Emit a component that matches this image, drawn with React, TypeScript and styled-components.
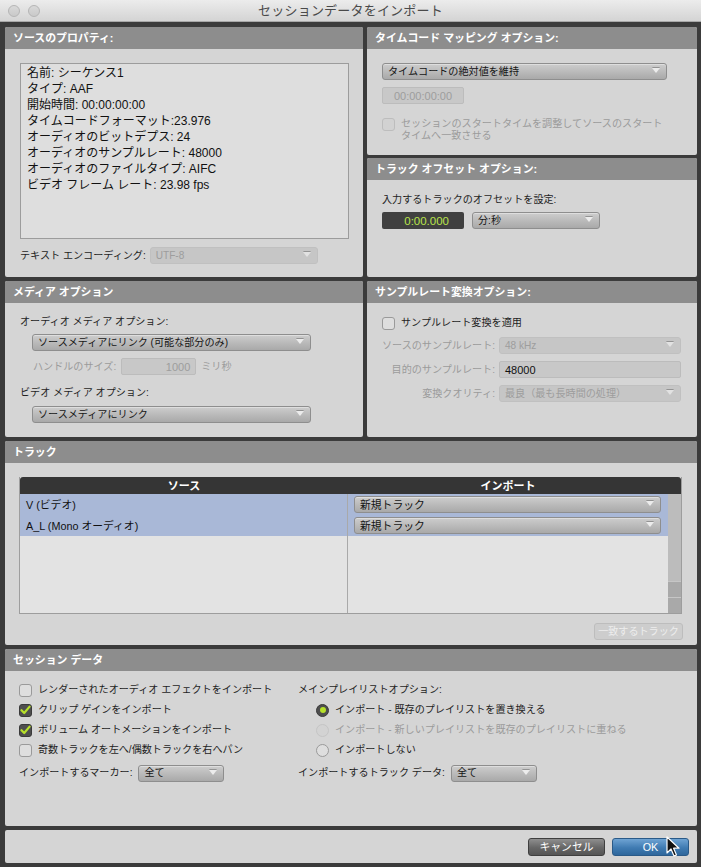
import React from "react";
import styled, { createGlobalStyle } from "styled-components";

const GlobalStyle = createGlobalStyle`
  html, body {
    margin: 0;
    padding: 0;
    background: #3b3b3b;
  }
  body {
    font-family: "Liberation Sans", "Noto Sans CJK JP", sans-serif;
    font-size: 10.1px;
    line-height: 14px;
    color: #1a1a1a;
  }
  * {
    box-sizing: border-box;
  }
`;

const Window = styled.div`
  position: relative;
  width: 701px;
  height: 867px;
  background: #3b3b3b;
  display: flex;
  flex-direction: column;
  overflow: hidden;
`;

const TitleBar = styled.div`
  height: 22px;
  flex: none;
  display: grid;
  grid-template-columns: 1fr auto 1fr;
  align-items: center;
  background: linear-gradient(#ececec, #d4d4d4);
  border-bottom: 1px solid #a8a8a8;
  padding: 0 8px;
`;

const Lights = styled.div`
  display: flex;
  gap: 8px;
`;

const Light = styled.span`
  width: 12px;
  height: 12px;
  border-radius: 50%;
  background: linear-gradient(#d9d9d9, #c9c9c9);
  border: 1px solid #b5b5b5;
`;

const Title = styled.div`
  font-size: 13px;
  color: #4a4a4a;
  letter-spacing: 0.2px;
`;

const Content = styled.div`
  flex: 1;
  display: grid;
  grid-template-rows: 250px 156px 204px 177px 33px;
  row-gap: 4px;
  padding: 5px 5px 0 5px;
`;

const TwoCol = styled.div`
  display: grid;
  grid-template-columns: 358px 330px;
  column-gap: 4px;
`;

const Stack = styled.div`
  display: grid;
  grid-template-rows: 128px 1fr;
  row-gap: 3px;
`;

const Panel = styled.section`
  background: #d5d5d5;
  border-radius: 2px;
  display: flex;
  flex-direction: column;
  overflow: hidden;
`;

const PanelHeader = styled.div`
  height: 22px;
  flex: none;
  background: #8d8d8d;
  color: #ffffff;
  font-size: 10.9px;
  font-weight: bold;
  padding: 0 8px;
  display: flex;
  align-items: center;
`;

const Body = styled.div<{ $pad: string }>`
  padding: ${(p) => p.$pad};
  display: flex;
  flex-direction: column;
  flex: 1;
`;

const ListBox = styled.div`
  width: 329px;
  height: 176px;
  background: #dedede;
  border: 1px solid #9c9c9c;
  padding: 1px 6px;
  font-size: 12px;
  line-height: 16px;
  color: #111;
`;

const Row = styled.div<{ $gap?: number; $mt?: number; $ml?: number; $top?: boolean }>`
  display: flex;
  align-items: ${(p) => (p.$top ? "flex-start" : "center")};
  gap: ${(p) => p.$gap ?? 4}px;
  margin-top: ${(p) => p.$mt ?? 0}px;
  margin-left: ${(p) => p.$ml ?? 0}px;
`;

const Label = styled.span<{ $dim?: boolean }>`
  color: ${(p) => (p.$dim ? "#9b9b9b" : "#1e1e1e")};
  white-space: nowrap;
`;

const SelectBox = styled.div<{ $w: number; $disabled?: boolean }>`
  position: relative;
  width: ${(p) => p.$w}px;
  height: 17px;
  flex: none;
  border-radius: 3px;
  padding: 0 5px;
  display: flex;
  align-items: center;
  white-space: nowrap;
  color: ${(p) => (p.$disabled ? "#9d9d9d" : "#151515")};
  background: ${(p) =>
    p.$disabled ? "#c6c6c6" : "linear-gradient(#cdcdcd, #b7b7b7 60%, #a9a9a9)"};
  border: 1px solid ${(p) => (p.$disabled ? "#c0c0c0" : "#8e8e8e")};
  box-shadow: ${(p) => (p.$disabled ? "none" : "inset 0 1px 0 rgba(255,255,255,0.35)")};
`;

const Arrow = styled.span<{ $disabled?: boolean }>`
  position: absolute;
  right: 6px;
  top: 4px;
  width: 0;
  height: 0;
  border-left: 4px solid transparent;
  border-right: 4px solid transparent;
  border-top: 5px solid ${(p) => (p.$disabled ? "#e2e2e2" : "#ececec")};
  filter: drop-shadow(0 -1px 0 rgba(0, 0, 0, 0.25));
`;

const Field = styled.div<{ $w: number; $align?: string; $dim?: boolean }>`
  width: ${(p) => p.$w}px;
  height: 17px;
  flex: none;
  border-radius: 2px;
  background: #c8c8c8;
  border: 1px solid #bcbcbc;
  display: flex;
  align-items: center;
  justify-content: ${(p) => p.$align ?? "flex-start"};
  padding: 0 5px;
  font-size: 11px;
  color: ${(p) => (p.$dim ? "#9d9d9d" : "#111")};
`;

const CounterField = styled.div`
  width: 82px;
  height: 17px;
  border-radius: 2px;
  background: #404040;
  color: #b9e44b;
  display: flex;
  align-items: center;
  justify-content: flex-end;
  padding-right: 15px;
  font-size: 11.5px;
`;

const Box = styled.span<{ $checked?: boolean; $disabled?: boolean }>`
  width: 13px;
  height: 13px;
  flex: none;
  border-radius: 3px;
  display: flex;
  align-items: center;
  justify-content: center;
  background: ${(p) => (p.$checked ? "#4e4e4e" : p.$disabled ? "#d2d2d2" : "#dedede")};
  border: 1px solid ${(p) => (p.$checked ? "#3a3a3a" : p.$disabled ? "#bdbdbd" : "#9a9a9a")};
`;

const Radio = styled.span<{ $on?: boolean; $disabled?: boolean }>`
  width: 13px;
  height: 13px;
  flex: none;
  border-radius: 50%;
  display: flex;
  align-items: center;
  justify-content: center;
  background: ${(p) => (p.$on ? "#4e4e4e" : p.$disabled ? "#d3d3d3" : "#dedede")};
  border: 1px solid ${(p) => (p.$on ? "#3a3a3a" : p.$disabled ? "#c5c5c5" : "#9a9a9a")};
  &::after {
    content: "";
    display: ${(p) => (p.$on ? "block" : "none")};
    width: 6px;
    height: 6px;
    border-radius: 50%;
    background: #b6e12a;
  }
`;

const Wrap = styled.div`
  line-height: 12px;
  color: #9b9b9b;
`;

const RateGrid = styled.div`
  display: grid;
  grid-template-columns: 117px 182px;
  row-gap: 7px;
  align-items: center;
  margin-top: 7px;
`;

const RightLabel = styled.span`
  text-align: right;
  padding-right: 4px;
  color: #9b9b9b;
  white-space: nowrap;
`;

const Table = styled.div`
  width: 663px;
  height: 137px;
  display: flex;
  flex-direction: column;
  background: #e3e3e3;
  border: 1px solid #9d9d9d;
  border-top: none;
`;

const TableHead = styled.div`
  height: 17px;
  flex: none;
  display: grid;
  grid-template-columns: 328px 320px 1fr;
  background: #353535;
  color: #fff;
  font-weight: bold;
  font-size: 11px;
  border-radius: 3px 3px 0 0;
`;

const HeadCell = styled.div`
  display: flex;
  align-items: center;
  justify-content: center;
`;

const TableBody = styled.div`
  flex: 1;
  display: grid;
  grid-template-columns: 328px 320px 1fr;
`;

const Column = styled.div<{ $divider?: boolean }>`
  display: flex;
  flex-direction: column;
  border-right: ${(p) => (p.$divider ? "1px solid #a9a9a9" : "none")};
`;

const TrackRow = styled.div`
  height: 21px;
  background: #a9b8d7;
  display: flex;
  align-items: center;
  padding-left: 6px;
  font-size: 10.8px;
  color: #111;
`;

const Scroll = styled.div`
  display: flex;
  flex-direction: column;
  background: #bababa;
`;

const ScrollTrack = styled.div`
  flex: 1;
  background: #bcbcbc;
`;

const ScrollBtn = styled.div`
  height: 16px;
  background: #a9a9a9;
  border-top: 1px solid #c6c6c6;
`;

const FlatButton = styled.div`
  align-self: flex-end;
  margin: 9px 14px 0 0;
  width: 89px;
  height: 17px;
  border-radius: 3px;
  background: #cdcdcd;
  border: 1px solid #bdbdbd;
  color: #ededed;
  white-space: nowrap;
  display: flex;
  align-items: center;
  justify-content: center;
`;

const SessionGrid = styled.div`
  display: grid;
  grid-template-columns: 279px 1fr;
  padding: 9px 14px 0 14px;
`;

const SessionCol = styled.div`
  display: flex;
  flex-direction: column;
`;

const OptRow = styled.div<{ $indent?: number; $mt?: number }>`
  height: 20px;
  display: flex;
  align-items: center;
  gap: 6px;
  padding-left: ${(p) => p.$indent ?? 0}px;
  margin-top: ${(p) => p.$mt ?? 0}px;
`;

const Footer = styled.div`
  background: #d5d5d5;
  border-radius: 2px;
  display: flex;
  align-items: center;
  justify-content: flex-end;
  gap: 7px;
  padding-right: 8px;
`;

const DialogButton = styled.div<{ $primary?: boolean }>`
  width: 77px;
  height: 18px;
  border-radius: 3px;
  display: flex;
  align-items: center;
  justify-content: center;
  color: #fff;
  font-size: 10.8px;
  background: ${(p) =>
    p.$primary
      ? "linear-gradient(#6fa3d3, #3f7bb2 55%, #2f679c)"
      : "linear-gradient(#8e8e8e, #666 55%, #555)"};
  border: 1px solid ${(p) => (p.$primary ? "#2a5a88" : "#3f3f3f")};
`;

const Cursor = styled.svg`
  position: absolute;
  left: 666px;
  top: 836px;
`;

const Select = ({ w, text, disabled }: { w: number; text: string; disabled?: boolean }) => (
  <SelectBox $w={w} $disabled={disabled}>
    {text}
    <Arrow $disabled={disabled} />
  </SelectBox>
);

const Check = ({ checked, disabled }: { checked?: boolean; disabled?: boolean }) => (
  <Box $checked={checked} $disabled={disabled}>
    {checked && (
      <svg width="11" height="10" viewBox="0 0 11 10">
        <path d="M1.5 5.2 L4.2 8 L9.6 1.6" fill="none" stroke="#b6e12a" strokeWidth="2.2" strokeLinecap="round" strokeLinejoin="round" />
      </svg>
    )}
  </Box>
);

const sourceProps = [
  "名前: シーケンス1",
  "タイプ: AAF",
  "開始時間: 00:00:00:00",
  "タイムコードフォーマット:23.976",
  "オーディオのビットデプス: 24",
  "オーディオのサンプルレート: 48000",
  "オーディオのファイルタイプ: AIFC",
  "ビデオ フレーム レート: 23.98 fps",
];

const tracks = ["V (ビデオ)", "A_L (Mono オーディオ)"];

export default function App() {
  return (
    <Window>
      <GlobalStyle />
      <TitleBar>
        <Lights>
          <Light />
          <Light />
        </Lights>
        <Title>セッションデータをインポート</Title>
        <span />
      </TitleBar>

      <Content>
        <TwoCol>
          <Panel>
            <PanelHeader>ソースのプロパティ:</PanelHeader>
            <Body $pad="14px 0 0 15px">
              <ListBox>
                {sourceProps.map((t) => (
                  <div key={t}>{t}</div>
                ))}
              </ListBox>
              <Row $mt={8}>
                <Label>テキスト エンコーディング:</Label>
                <Select w={168} text="UTF-8" disabled />
              </Row>
            </Body>
          </Panel>

          <Stack>
            <Panel>
              <PanelHeader>タイムコード マッピング オプション:</PanelHeader>
              <Body $pad="14px 0 0 15px">
                <Select w={285} text="タイムコードの絶対値を維持" />
                <Row $mt={7}>
                  <Field $w={82} $align="center" $dim>
                    00:00:00:00
                  </Field>
                </Row>
                <Row $mt={14} $gap={6} $top>
                  <Check disabled />
                  <Wrap>
                    セッションのスタートタイムを調整してソースのスタート
                    <br />
                    タイムへ一致させる
                  </Wrap>
                </Row>
              </Body>
            </Panel>
            <Panel>
              <PanelHeader>トラック オフセット オプション:</PanelHeader>
              <Body $pad="13px 0 0 15px">
                <Label>入力するトラックのオフセットを設定:</Label>
                <Row $mt={5} $gap={8}>
                  <CounterField>0:00.000</CounterField>
                  <Select w={128} text="分:秒" />
                </Row>
              </Body>
            </Panel>
          </Stack>
        </TwoCol>

        <TwoCol>
          <Panel>
            <PanelHeader>メディア オプション</PanelHeader>
            <Body $pad="12px 0 0 15px">
              <Label>オーディオ メディア オプション:</Label>
              <Row $mt={5} $ml={12}>
                <Select w={279} text="ソースメディアにリンク (可能な部分のみ)" />
              </Row>
              <Row $mt={7} $ml={13} $gap={5}>
                <Label $dim>ハンドルのサイズ:</Label>
                <Field $w={75} $align="flex-end" $dim>
                  1000
                </Field>
                <Label $dim>ミリ秒</Label>
              </Row>
              <Row $mt={11}>
                <Label>ビデオ メディア オプション:</Label>
              </Row>
              <Row $mt={6} $ml={12}>
                <Select w={279} text="ソースメディアにリンク" />
              </Row>
            </Body>
          </Panel>

          <Panel>
            <PanelHeader>サンプルレート変換オプション:</PanelHeader>
            <Body $pad="13px 0 0 15px">
              <Row $gap={6}>
                <Check />
                <Label>サンプルレート変換を適用</Label>
              </Row>
              <RateGrid>
                <RightLabel>ソースのサンプルレート:</RightLabel>
                <Select w={182} text="48 kHz" disabled />
                <RightLabel>目的のサンプルレート:</RightLabel>
                <Field $w={182}>48000</Field>
                <RightLabel>変換クオリティ:</RightLabel>
                <Select w={182} text="最良（最も長時間の処理）" disabled />
              </RateGrid>
            </Body>
          </Panel>
        </TwoCol>

        <Panel>
          <PanelHeader>トラック</PanelHeader>
          <Body $pad="14px 0 0 14px">
            <Table>
              <TableHead>
                <HeadCell>ソース</HeadCell>
                <HeadCell>インポート</HeadCell>
                <span />
              </TableHead>
              <TableBody>
                <Column $divider>
                  {tracks.map((t) => (
                    <TrackRow key={t}>{t}</TrackRow>
                  ))}
                </Column>
                <Column>
                  {tracks.map((t) => (
                    <TrackRow key={t}>
                      <Select w={307} text="新規トラック" />
                    </TrackRow>
                  ))}
                </Column>
                <Scroll>
                  <ScrollTrack />
                  <ScrollBtn />
                  <ScrollBtn />
                </Scroll>
              </TableBody>
            </Table>
            <FlatButton>一致するトラック</FlatButton>
          </Body>
        </Panel>

        <Panel>
          <PanelHeader>セッション データ</PanelHeader>
          <SessionGrid>
            <SessionCol>
              <OptRow>
                <Check />
                <Label>レンダーされたオーディオ エフェクトをインポート</Label>
              </OptRow>
              <OptRow>
                <Check checked />
                <Label>クリップ ゲインをインポート</Label>
              </OptRow>
              <OptRow>
                <Check checked />
                <Label>ボリューム オートメーションをインポート</Label>
              </OptRow>
              <OptRow>
                <Check />
                <Label>奇数トラックを左へ/偶数トラックを右へパン</Label>
              </OptRow>
              <OptRow $mt={3}>
                <Label>インポートするマーカー:</Label>
                <Select w={86} text="全て" />
              </OptRow>
            </SessionCol>
            <SessionCol>
              <OptRow>
                <Label>メインプレイリストオプション:</Label>
              </OptRow>
              <OptRow $indent={18}>
                <Radio $on />
                <Label>インポート - 既存のプレイリストを置き換える</Label>
              </OptRow>
              <OptRow $indent={18}>
                <Radio $disabled />
                <Label $dim>インポート - 新しいプレイリストを既存のプレイリストに重ねる</Label>
              </OptRow>
              <OptRow $indent={18}>
                <Radio />
                <Label>インポートしない</Label>
              </OptRow>
              <OptRow $mt={3}>
                <Label>インポートするトラック データ:</Label>
                <Select w={86} text="全て" />
              </OptRow>
            </SessionCol>
          </SessionGrid>
        </Panel>

        <Footer>
          <DialogButton>キャンセル</DialogButton>
          <DialogButton $primary>OK</DialogButton>
        </Footer>
      </Content>

      <Cursor width="14" height="22" viewBox="0 0 14 22">
        <path d="M1 1 L1 17 L5 13 L8 20 L10.5 19 L7.6 12.2 L13 12.2 Z" fill="#111" stroke="#fff" strokeWidth="1.2" strokeLinejoin="round" />
      </Cursor>
    </Window>
  );
}
